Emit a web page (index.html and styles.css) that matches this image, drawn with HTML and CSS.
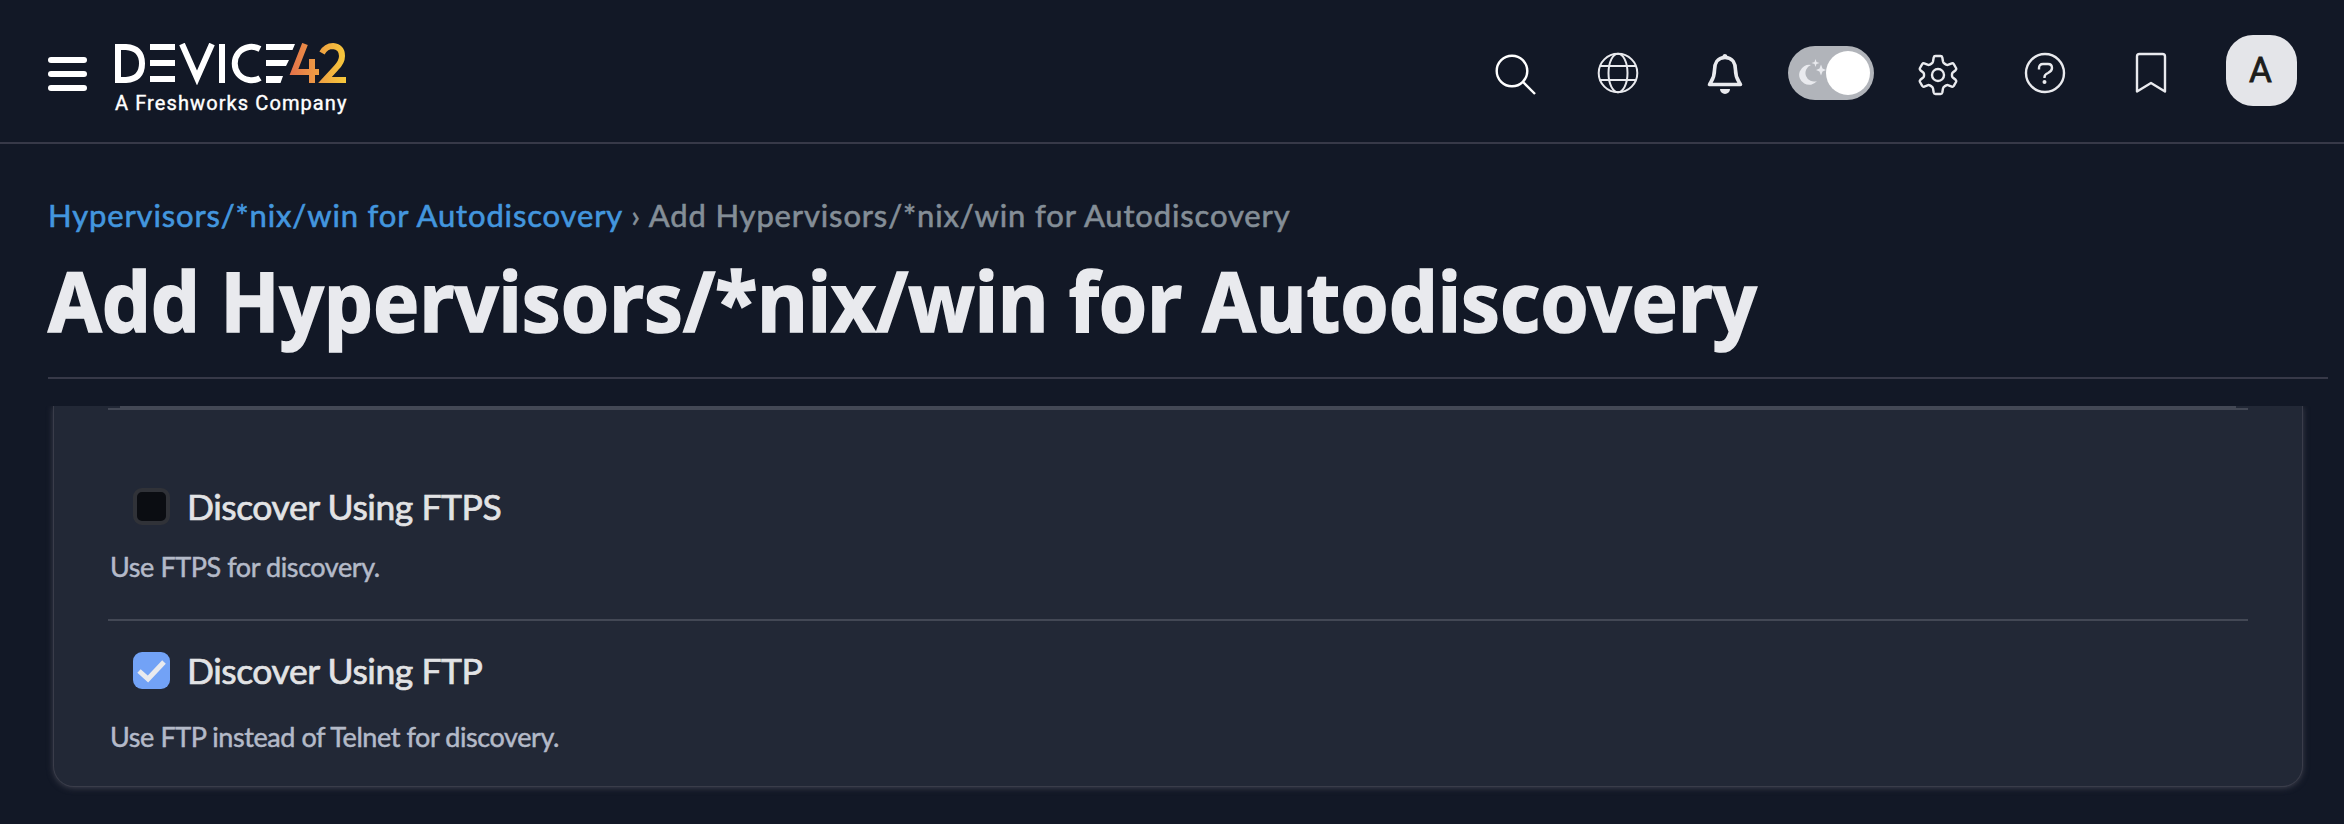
FILE: index.html
```html
<!DOCTYPE html>
<html lang="en">
<head>
<meta charset="utf-8">
<title>Add Hypervisors/*nix/win for Autodiscovery</title>
<link rel="stylesheet" href="styles.css">
</head>
<body>
<header class="topbar">
  <button class="menu" aria-label="Menu"><span></span><span></span><span></span></button>
  <div class="brand">
    <svg class="logo" width="232" height="42" viewBox="0 0 232 42">
      <defs><linearGradient id="g" gradientUnits="userSpaceOnUse" x1="176" y1="0" x2="231" y2="0"><stop offset="0" stop-color="#e5734a"/><stop offset="1" stop-color="#f7c93b"/></linearGradient></defs>
      <g fill="none" stroke="#fff" stroke-width="6">
        <path d="M3 4H11Q27 5 27 20.500T11 37H3Z"/>
        <path d="M35 4H60M35 20H60M35 36H60"/>
        <path d="M67 1L82 35L97 1"/>
        <path d="M107 1V40"/>
        <path d="M145 6Q139 3 134 4C115 7 115 34 134 37Q140 38 145 35"/>
      </g>
      <path fill="#fff" d="M151 1H180L177.500 7H151ZM151 17H174L171 23H151ZM151 33H168L165.500 40H151Z"/>
      <g fill="none" stroke="url(#g)" stroke-width="6">
        <path d="M190 1L179 29H204M197 16V40"/>
        <path d="M207 10Q211 3 218 3Q227 4 227 13Q227 19 221 25L210 37H231"/>
      </g>
    </svg>
    <div class="tagline">A Freshworks Company</div>
  </div>
  <nav class="tools">
    <svg class="ic search" width="42" height="42" viewBox="0 0 42 42"><circle cx="17" cy="17" r="15.300"/><path d="M28 28L40 40"/></svg>
    <svg class="ic globe" width="42" height="42" viewBox="0 0 42 42"><circle cx="21" cy="21" r="19.300"/><ellipse cx="21" cy="21" rx="9.500" ry="19.300"/><path d="M3 14H39M3 28H39"/></svg>
    <svg class="ic bell" width="36" height="42" viewBox="0 0 36 42"><path d="M18 4.500C10 4.500 7.500 11 7.500 17C7.500 25 5 27 2.500 31.500H33.500C31 27 28.500 25 28.500 17C28.500 11 26 4.500 18 4.500Z"/><path class="solid" d="M15.500 3.500a2.500 2.500 0 0 1 5 0V6h-5ZM13 36H23A5 5 0 0 1 13 36Z"/></svg>
    <div class="toggle"><svg width="27" height="27" viewBox="0 0 27 27"><path d="M12 6A10 10 0 1 0 18 22A8.500 8.500 0 0 1 12 6ZM16.500 0L17.500 3L20.500 4L17.500 5L16.500 8L15.500 5L12.500 4L15.500 3ZM22 5.500L23.500 9.500L27 11L23.500 12.500L22 16.500L20.500 12.500L17 11L20.500 9.500Z"/></svg><span class="knob"></span></div>
    <svg class="ic gear" width="40" height="42" viewBox="0 0 40 42"><path d="M17.500 2H22.500Q24 2 24.300 3.500L25 7.500Q25.300 9 26.500 9.600L28.200 10.600Q29.300 11.200 30.500 10.700L33.800 9.400Q35 9 35.800 10.200L38 14Q38.600 15.300 37.600 16.200L34.800 18.500Q34 19.200 34 20V22Q34 22.800 34.800 23.500L37.600 25.800Q38.600 26.700 38 28L35.800 31.800Q35 33 33.800 32.600L30.500 31.300Q29.300 30.800 28.200 31.400L26.500 32.400Q25.300 33 25 34.500L24.300 38.500Q24 40 22.500 40H17.500Q16 40 15.700 38.500L15 34.500Q14.700 33 13.500 32.400L11.800 31.400Q10.700 30.800 9.500 31.300L6.200 32.600Q5 33 4.200 31.800L2 28Q1.400 26.700 2.400 25.800L5.200 23.500Q6 22.800 6 22V20Q6 19.200 5.200 18.500L2.400 16.200Q1.400 15.300 2 14L4.200 10.200Q5 9 6.200 9.400L9.500 10.700Q10.700 11.200 11.800 10.600L13.500 9.600Q14.700 9 15 7.500L15.700 3.500Q16 2 17.500 2Z"/><circle cx="20" cy="21" r="6"/></svg>
    <svg class="ic help" width="42" height="42" viewBox="0 0 42 42"><circle cx="21" cy="21" r="19"/><path d="M15 17.500V16Q15 12 19 12H24Q28 12 28 16Q28 19 24 21Q20.500 22.500 20.500 25V26"/><circle class="solid" cx="20.500" cy="30" r="2"/></svg>
    <svg class="ic mark" width="32" height="42" viewBox="0 0 32 42"><path d="M2 39.500V4.500Q2 2 4.500 2H27.500Q30 2 30 4.500V39.500L16 31Z"/></svg>
    <div class="avatar">A</div>
  </nav>
</header>
<main class="page">
  <div class="crumbs"><a>Hypervisors/*nix/win for Autodiscovery</a><span class="sep">›</span><span class="here">Add Hypervisors/*nix/win for Autodiscovery</span></div>
  <h1 class="title"><span>Add Hypervisors/*nix/win for Autodiscovery</span></h1>
  <div class="viewport">
    <section class="panel">
      <div class="prev"></div>
      <div class="row first">
        <label class="check"><span class="box"></span><span class="label">Discover Using FTPS</span></label>
        <p class="hint">Use FTPS for discovery.</p>
      </div>
      <div class="row second">
        <label class="check"><span class="box on"><svg width="37" height="37" viewBox="0 0 37 37"><path d="M6 19L15 27L31 10"/></svg></span><span class="label">Discover Using FTP</span></label>
        <p class="hint">Use FTP instead of Telnet for discovery.</p>
      </div>
    </section>
  </div>
</main>
</body>
</html>
```
FILE: styles.css
```css
* { box-sizing: border-box; }
body { margin: 0; height: 824px; overflow: hidden; background: #121826; color: #e9eaee; font-family: Lato, sans-serif; }
.topbar { display: flex; height: 144px; padding-left: 48px; border-bottom: 2px solid #373948; }
.menu { display: flex; flex-direction: column; gap: 8px; width: 39px; margin: 57px 28px 0 0; padding: 0; border: 0; background: none; }
.menu span { height: 6px; border-radius: 3px; background: #fff; }
.brand { width: 240px; padding-top: 43px; }
.logo { display: block; }
.tagline { margin-top: 6px; font: 400 20px/24px Roboto, sans-serif; letter-spacing: 1.1px; -webkit-text-stroke: .4px; color: #fff; white-space: nowrap; }
.tools { display: flex; margin-left: auto; padding-right: 47px; }
.ic { fill: none; stroke: #e9eaee; stroke-width: 2.4; stroke-linejoin: round; flex: none; }
.ic .solid { fill: #e9eaee; stroke: none; }
.search { margin: 54px 60px 0 0; stroke: #fff; }
.globe { margin: 52px 68px 0 0; stroke-width: 2; }
.bell { margin: 53px 45px 0 0; stroke-width: 3.6; }
.toggle { display: flex; width: 86px; height: 54px; margin: 46px 44px 0 0; padding: 5px 4px 0 11px; border-radius: 27px; background: #b1b4ba; }
.toggle svg { margin-top: 8px; fill: #e9eaee; }
.knob { width: 44px; height: 44px; border-radius: 50%; background: #fff; }
.gear { margin: 54px 66px 0 0; }
.help { margin: 52px 69px 0 0; }
.mark { margin: 52px 59px 0 0; }
.avatar { width: 71px; height: 71px; margin-top: 35px; padding-right: 2px; border-radius: 27px; background: #e4e5e9; color: #1d1d1b; font: 400 35px/72px Roboto, sans-serif; -webkit-text-stroke: .8px; text-align: center; }
.page { padding: 0 16px 0 48px; }
.crumbs { display: flex; height: 50px; margin-top: 47px; font-size: 31px; line-height: 48px; letter-spacing: .85px; -webkit-text-stroke: .6px; white-space: nowrap; color: #848e97; }
.crumbs a { color: #4396de; }
.sep { margin: 0 8px; }
.title { height: 138px; margin: 0; border-bottom: 2px solid #373948; font: 700 83px/118px "Noto Sans", sans-serif; -webkit-text-stroke: 1.6px; white-space: nowrap; }
.title span { display: inline-block; transform-origin: 0 50%; transform: scaleX(.936); }
.viewport { height: 400px; margin: 27px -16px 0 -8px; padding: 0 42px 0 14px; overflow: hidden; }
.panel { height: 380px; padding: 0 54px; border-radius: 0 0 20px 20px; background: #222836; box-shadow: 0 0 0 1px #3a3d4a, 0 1px 7px #4a4b58; }
.prev { height: 2px; margin: 0 12px; background: #434855; }
.row { border-top: 2px solid #434855; }
.first { height: 211px; padding-top: 78px; }
.second { padding-top: 31px; }
.check { display: flex; height: 37px; padding-left: 25px; }
.box { width: 37px; height: 37px; border: 4px solid #303238; border-radius: 9px; background: #0b0d12; }
.box.on { border: 0; background: #72a2f6; }
.box svg { display: block; fill: none; stroke: #e9eaee; stroke-width: 5; }
.label { margin-left: 17px; font-size: 35.5px; line-height: 38px; letter-spacing: -.45px; -webkit-text-stroke: .7px; color: #e2e3e5; }
.hint { margin: 0 0 0 2px; padding-top: 24px; font-size: 27px; line-height: 36px; letter-spacing: -.42px; -webkit-text-stroke: .5px; color: #b4bac8; }
.second .hint { padding-top: 30px; }
```
